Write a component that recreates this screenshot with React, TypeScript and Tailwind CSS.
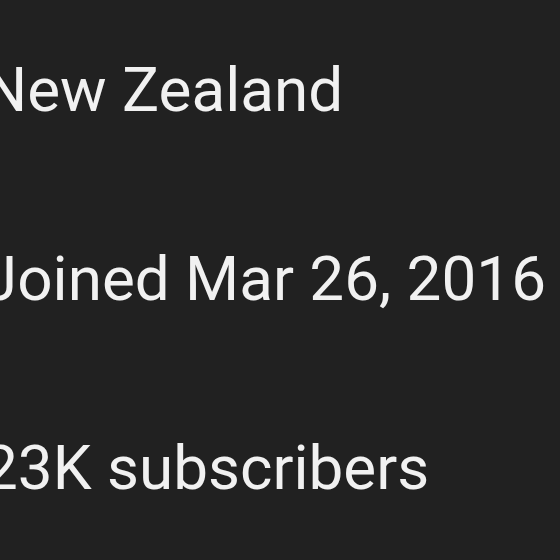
export default function App() {
  return (
    <div className="w-[560px] h-[560px] bg-[#212121] overflow-hidden">
      <div
        className="flex flex-col pt-[48px] ml-[-17px] text-[#f1f1f1] text-[62px] leading-[84px] gap-[105px] whitespace-nowrap"
        style={{ fontFamily: "Roboto, Arial, sans-serif" }}
      >
        <div>New Zealand</div>
        <div>Joined Mar 26, 2016</div>
        <div>23K subscribers</div>
      </div>
    </div>
  );
}
